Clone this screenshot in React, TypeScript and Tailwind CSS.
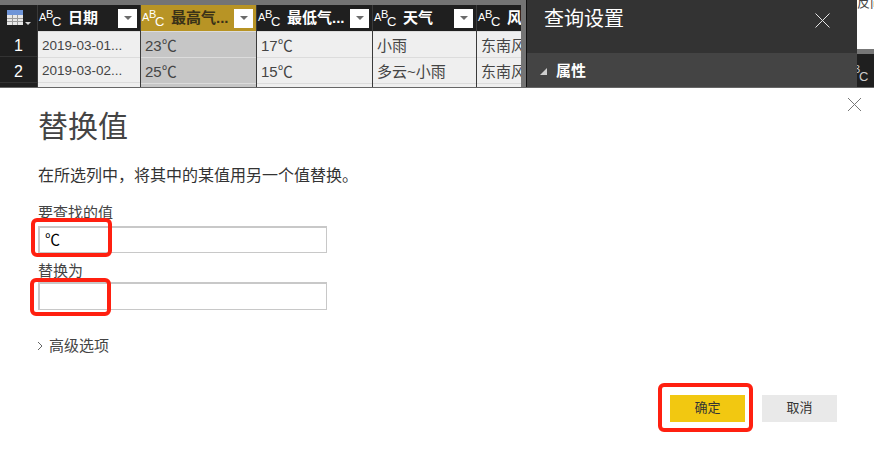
const cjk = "font-['Liberation_Sans','Noto_Sans_CJK_SC',sans-serif]";

function AbcIcon({ className = "text-white" }: { className?: string }) {
  return (
    <span className={`relative block w-[20px] h-[26px] shrink-0 font-['Liberation_Sans',sans-serif] font-normal ${className}`}>
      <span className="absolute left-0 top-[7px] text-[11px] leading-[11px]">A</span>
      <span className="absolute left-[7px] top-[4px] text-[11px] leading-[11px]">B</span>
      <span className="absolute left-[13px] top-[10px] text-[13px] leading-[13px]">C</span>
    </span>
  );
}

function FilterButton() {
  return (
    <span className="flex items-center justify-center w-[19px] h-[19px] bg-white shrink-0">
      <svg width="10" height="6" viewBox="0 0 10 6">
        <path d="M1 1h8L5 5z" fill="#6b6b6b" />
      </svg>
    </span>
  );
}

const columns = [
  { name: "日期", width: "w-[103px]", cellText: "text-[13.5px]", cells: ["2019-03-01...", "2019-03-02..."] },
  { name: "最高气...", width: "w-[116px]", cellText: "text-[15px]", cells: ["23℃", "25℃"], active: true },
  { name: "最低气...", width: "w-[116px]", cellText: "text-[15px]", cells: ["17℃", "15℃"] },
  { name: "天气", width: "w-[104px]", cellText: "text-[15px]", cells: ["小雨", "多云~小雨"] },
  { name: "风", width: "w-[45px]", cellText: "text-[15px]", cells: ["东南风", "东南风"], clipped: true },
];

function DataColumn({ col }: { col: (typeof columns)[number] }) {
  return (
    <div className={`${col.width} shrink-0 flex flex-col overflow-hidden border-l border-[#3a3a3a]`}>
      <div className={`h-[26px] mb-[1px] flex items-center pl-[1px] pr-[3px] ${col.active ? "bg-[#b89425]" : "bg-[#1f1f1f] text-white"}`}>
        <AbcIcon />
        <span className={`ml-[9px] text-[15px] font-bold whitespace-nowrap flex-1 ${col.active ? "text-[#3a3218]" : ""}`}>{col.name}</span>
        {!col.clipped && <FilterButton />}
      </div>
      {col.cells.map((c, i) => (
        <div
          key={i}
          className={`h-[25px] mb-[1px] pl-[4px] pt-[3px] flex items-center ${col.cellText} text-[#444] whitespace-nowrap ${col.active ? "bg-[#c6c6c6]" : "bg-[#efefef]"}`}
        >
          {c}
        </div>
      ))}
      <div className={`h-[4px] ${col.active ? "bg-[#c6c6c6]" : "bg-[#efefef]"}`} />
    </div>
  );
}

function TopStrip() {
  return (
    <div className="flex h-[87px] overflow-hidden bg-[#747474]">
      <div className="w-[521px] shrink-0 mt-[5px] bg-[#dcdcdc] flex h-[82px] overflow-hidden">
        <div className="w-[37px] shrink-0 flex flex-col bg-[#1f1f1f]">
          <div className="h-[26px] mb-[1px] flex items-center pl-[7px]">
            <svg width="25" height="16" viewBox="0 0 25 16">
              <rect x="0" y="0" width="16" height="15" fill="#e8e8e8" />
              <rect x="0" y="0" width="16" height="5" fill="#6f95d8" />
              <path d="M5.5 5v10M10.5 5v10M0 8.5h16M0 11.5h16" stroke="#9a9a9a" strokeWidth="1" />
              <path d="M18 12h6l-3 3z" fill="#d8d8d8" />
            </svg>
          </div>
          <div className="h-[25px] mb-[1px] pt-[4px] flex items-center justify-center text-white text-[16px] font-['Liberation_Sans',sans-serif] border-b border-[#333]">1</div>
          <div className="h-[25px] mb-[1px] pt-[4px] flex items-center justify-center text-white text-[16px] font-['Liberation_Sans',sans-serif] border-b border-[#333]">2</div>
        </div>
        {columns.map((col) => (
          <DataColumn key={col.name} col={col} />
        ))}
      </div>
      <div className="w-[5px] shrink-0" />
      <div className="w-[331px] shrink-0 border-l border-[#111] flex flex-col">
        <div className="h-[53px] bg-[#333333] flex items-start pl-[17px] pr-[27px] justify-between">
          <span className="mt-[5px] text-[20px] leading-[28px] text-white">查询设置</span>
          <svg className="mt-[13px]" width="15" height="15" viewBox="0 0 15 15">
            <path d="M0.5 0.5l14 14M14.5 0.5l-14 14" stroke="#e6e6e6" strokeWidth="1" />
          </svg>
        </div>
        <div className="flex-1 bg-[#444444] flex items-center pl-[13px] gap-[9px] pt-[3px]">
          <svg width="7" height="7" viewBox="0 0 7 7">
            <path d="M7 0v7H0z" fill="#cfcfcf" />
          </svg>
          <span className="text-[15px] font-bold text-white">属性</span>
        </div>
      </div>
      <div className="flex-1 flex flex-col overflow-hidden">
        <div className="h-[49px] bg-white overflow-hidden">
          <div className="-mt-[5px] text-[13px] leading-[16px] text-[#444] whitespace-nowrap">反向</div>
        </div>
        <div className="h-[5px] bg-[#777]" />
        <div className="flex-1 bg-[#1f1f1f] overflow-hidden">
          <div className="-ml-[11px] mt-[6px]">
            <AbcIcon className="text-[#ccc]" />
          </div>
        </div>
      </div>
    </div>
  );
}

export default function App() {
  return (
    <div className={`relative w-[874px] h-[457px] overflow-hidden bg-white ${cjk}`}>
      <TopStrip />
      <div className="h-[370px] border-t border-[#666] flex flex-col pl-[38px] pr-[37px]">
        <h1 className="mt-[18px] text-[30px] leading-[42px] text-[#444]">替换值</h1>
        <p className="mt-[17px] text-[16px] leading-[22px] text-[#333]">在所选列中，将其中的某值用另一个值替换。</p>
        <div className="mt-[17px] text-[15px] leading-[18px] text-[#444]">要查找的值</div>
        <div className="mt-[4px] w-[289px] h-[27px] border-2 border-[#c8c8c8] border-b-[1px] border-r-[1px] pl-[5px] flex items-center text-[15px] text-black">
          ℃
        </div>
        <div className="mt-[9px] text-[15px] leading-[18px] text-[#444]">替换为</div>
        <div className="mt-[2px] w-[289px] h-[28px] border-2 border-[#c8c8c8] border-b-[1px] border-r-[1px]" />
        <div className="mt-[26px] -ml-[1px] flex items-center gap-[6px] text-[15px] leading-[20px] text-[#444]">
          <svg width="6" height="10" viewBox="0 0 6 10">
            <path d="M1 1l4 4-4 4" fill="none" stroke="#666" strokeWidth="1" />
          </svg>
          <span>高级选项</span>
        </div>
        <div className="mt-[39px] flex justify-end gap-[17px] text-[13px] text-[#333]">
          <div className="w-[75px] h-[27px] pb-[1px] bg-[#f2c811] flex items-center justify-center">确定</div>
          <div className="w-[75px] h-[27px] pb-[1px] bg-[#e9e9e9] flex items-center justify-center">取消</div>
        </div>
      </div>

      {/* dialog close */}
      <svg className="absolute left-[847px] top-[97px]" width="15" height="15" viewBox="0 0 15 15">
        <path d="M1 1l13 13M14 1L1 14" stroke="#777" strokeWidth="1" />
      </svg>

      {/* red annotation boxes */}
      <div className="absolute left-[31px] top-[218px] w-[81px] h-[39px] border-[4px] border-[#ff2010] rounded-[6px]" />
      <div className="absolute left-[30px] top-[278px] w-[81px] h-[38px] border-[4px] border-[#ff2010] rounded-[6px]" />
      <div className="absolute left-[658px] top-[383px] w-[95px] h-[49px] border-[4px] border-[#ff2010] rounded-[6px]" />
    </div>
  );
}
